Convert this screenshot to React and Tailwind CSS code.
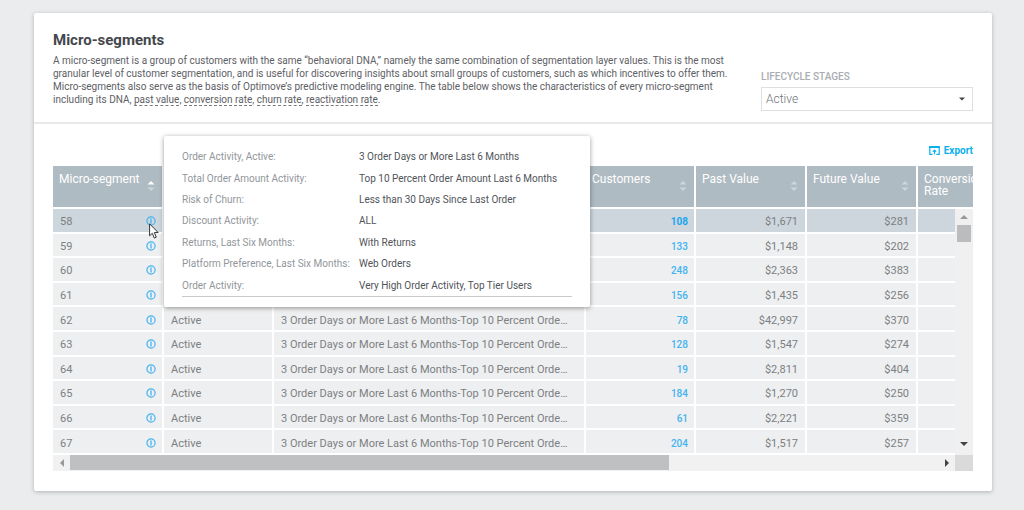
import React from 'react';

const rows = [
  ['58', '108', '$1,671', '$281'],
  ['59', '133', '$1,148', '$202'],
  ['60', '248', '$2,363', '$383'],
  ['61', '156', '$1,435', '$256'],
  ['62', '78', '$42,997', '$370'],
  ['63', '128', '$1,547', '$274'],
  ['64', '19', '$2,811', '$404'],
  ['65', '184', '$1,270', '$250'],
  ['66', '61', '$2,221', '$359'],
  ['67', '204', '$1,517', '$257'],
];

const details = [
  ['Order Activity, Active:', '3 Order Days or More Last 6 Months'],
  ['Total Order Amount Activity:', 'Top 10 Percent Order Amount Last 6 Months'],
  ['Risk of Churn:', 'Less than 30 Days Since Last Order'],
  ['Discount Activity:', 'ALL'],
  ['Returns, Last Six Months:', 'With Returns'],
  ['Platform Preference, Last Six Months:', 'Web Orders'],
  ['Order Activity:', 'Very High Order Activity, Top Tier Users'],
];

function SortIcon({ active }) {
  return (
    <svg viewBox="0 0 8 12" className="mt-[7px] h-3 w-2 shrink-0" aria-hidden="true">
      <path d="M.5 4.5 4 1l3.5 3.5z" className={active ? 'fill-white' : 'fill-[#cbd6db]'} />
      <path d="M.5 7.5 4 11l3.5-3.5z" className="fill-[#cbd6db]" />
    </svg>
  );
}

function InfoIcon() {
  return (
    <svg viewBox="0 0 10 10" className="h-[10px] w-[10px]" aria-hidden="true">
      <circle cx="5" cy="5" r="4.1" fill="none" stroke="#45b3f0" strokeWidth="1.2" />
      <path d="M5 2.5v5" stroke="#45b3f0" strokeWidth="1.3" />
    </svg>
  );
}

function HeadCell({ children, active }) {
  return (
    <th scope="col" className="border-r-2 border-b-2 border-white bg-[#afbbc2] p-0 text-left align-top font-normal">
      <button type="button" className="flex w-full items-start justify-between pt-[7px] pr-[7px] pl-[6px] text-left">
        <span>{children}</span>
        <SortIcon active={active} />
      </button>
    </th>
  );
}

function Term({ children }) {
  return (
    <a href="#" className="border-b border-dashed border-[#777b80]">
      {children}
    </a>
  );
}

function Arrow({ d, className }) {
  return (
    <svg viewBox="0 0 8 8" className="h-2 w-2" aria-hidden="true">
      <path d={d} className={className} />
    </svg>
  );
}

function SegmentTable() {
  return (
    <table className="w-full table-fixed border-separate border-spacing-0">
      <colgroup>
        <col className="w-[111px]" />
        <col className="w-[110px]" />
        <col />
        <col className="w-[110px]" />
        <col className="w-[111px]" />
        <col className="w-[111px]" />
        <col className="w-[37px]" />
        <col className="w-[18px]" />
      </colgroup>
      <thead className="h-[43px] text-xs leading-3 text-white">
        <tr>
          <HeadCell active>Micro-segment</HeadCell>
          <HeadCell>Lifecycle Stage</HeadCell>
          <HeadCell>Name</HeadCell>
          <HeadCell>Customers</HeadCell>
          <HeadCell>Past Value</HeadCell>
          <HeadCell>Future Value</HeadCell>
          <th scope="col" colSpan={2} className="overflow-hidden border-b-2 border-white bg-[#afbbc2] pt-[7px] pl-[6px] text-left align-top font-normal">
            Conversion Rate
          </th>
        </tr>
      </thead>
      <tbody className="h-[246px] text-[11px] text-[#7c7f83]">
        {rows.map(([id, customers, past, future], i) => {
          const cell =
            i === 0
              ? 'border-r-2 border-b-2 border-white bg-[#cdd6dc] pl-[7px] pt-1 pb-0 leading-[18px]'
              : 'border-r-2 border-b-2 border-white bg-[#eeeff0] pl-[7px] pt-1 pb-0 leading-[18px]';
          return (
            <tr key={id}>
              <td className={cell + ' pr-[6px]'}>
                <div className="flex items-center justify-between">
                  <span>{id}</span>
                  <button type="button" className="pb-[2px]" aria-label={'Details of ' + id}>
                    <InfoIcon />
                  </button>
                </div>
              </td>
              <td className={cell}>Active</td>
              <td className={cell + ' overflow-hidden whitespace-nowrap'}>
                3 Order Days or More Last 6 Months-Top 10 Percent Orde…
              </td>
              <td className={cell + ' pr-[6px] text-right'}>
                <a href="#" className={i === 0 ? 'text-[10px] font-bold text-[#1ba5f0]' : 'text-[10px] font-medium text-[#45b3f0]'}>
                  {customers}
                </a>
              </td>
              <td className={cell + ' pr-[7px] text-right'}>{past}</td>
              <td className={cell + ' pr-[7px] text-right'}>{future}</td>
              <td className={i === 0 ? 'border-b-2 border-white bg-[#cdd6dc]' : 'border-b-2 border-white bg-[#eeeff0]'} />
              {i === 0 && (
                <td rowSpan={rows.length} className="h-px bg-[#f0f0f1] p-0">
                  <div className="flex h-full flex-col items-center justify-between pt-1 pb-[7px]">
                    <div className="flex flex-col items-center gap-1">
                      <Arrow d="M0 6 4 2l4 4z" className="fill-[#98999b]" />
                      <div className="h-[17px] w-[14px] bg-[#bbbcbd]" />
                    </div>
                    <Arrow d="M0 2h8L4 6z" className="fill-[#444]" />
                  </div>
                </td>
              )}
            </tr>
          );
        })}
      </tbody>
    </table>
  );
}

function DetailsCard() {
  return (
    <div
      role="tooltip"
      className="absolute -top-[30px] left-[111px] w-[426px] rounded-xs bg-white px-[18px] pt-[10px] pb-[10px] shadow-[0_1px_5px_rgba(0,0,0,0.4)]"
    >
      <dl className="grid h-[151px] auto-rows-fr grid-cols-[177px_1fr] items-center border-b border-[#c8cacc] text-[10px] text-[#505459]">
        {details.map(([term, value]) => (
          <React.Fragment key={term}>
            <dt className="whitespace-nowrap text-[#92969a]">{term}</dt>
            <dd>{value}</dd>
          </React.Fragment>
        ))}
      </dl>
    </div>
  );
}

export default function App() {
  return (
    <div className="min-h-screen bg-[#ebecee] pt-[13px] pr-8 pb-[19px] pl-[34px] font-['Roboto',sans-serif]">
      <main className="rounded-xs bg-white pb-5 shadow-[0_1px_4px_rgba(0,0,0,0.25)]">
        <header className="flex items-end justify-between border-b-2 border-[#e8e9ea] pt-[18px] pr-[19px] pb-[11px] pl-[19px]">
          <div className="w-[685px] pb-[5px]">
            <h1 className="text-[15px] leading-[18px] font-bold text-[#44474b]">Micro-segments</h1>
            <p className="mt-[5px] text-[10px] leading-[13px] text-[#5d6065]">
              A micro-segment is a group of customers with the same “behavioral DNA,” namely the same combination of
              segmentation layer values. This is the most granular level of customer segmentation, and is useful for
              discovering insights about small groups of customers, such as which incentives to offer them.
              Micro-segments also serve as the basis of Optimove’s predictive modeling engine. The table below shows
              the characteristics of every micro-segment including its DNA, <Term>past value</Term>,{' '}
              <Term>conversion rate</Term>, <Term>churn rate</Term>, <Term>reactivation rate</Term>.
            </p>
          </div>
          <div className="w-[212px]">
            <label htmlFor="stage" className="block text-[10px] leading-3 font-medium text-[#a9adb2]">
              LIFECYCLE STAGES
            </label>
            <div className="relative mt-1">
              <select
                id="stage"
                className="block h-6 w-full appearance-none rounded-none border border-[#dddfe0] bg-white px-1 text-xs font-light text-[#6d7075]"
              >
                <option>Active</option>
              </select>
              <svg viewBox="0 0 6 4" className="pointer-events-none absolute top-[10px] right-2 h-1 w-[6px]" aria-hidden="true">
                <path d="M0 .5h6L3 3.5z" fill="#444" />
              </svg>
            </div>
          </div>
        </header>

        <section className="px-[19px]">
          <div className="flex h-[42px] items-end justify-end pb-[7px]">
            <button type="button" className="flex items-center gap-1 text-[10px] leading-4 font-bold text-[#0ab0ee]">
              <svg viewBox="0 0 11 9" className="mb-[2px] h-[9px] w-[11px]" fill="none" stroke="currentColor" aria-hidden="true">
                <path d="M3.6 8.3H.8V1h9.4v7.3H7.4" strokeWidth="1.2" />
                <path d="M.2 1h10.6" strokeWidth="2" />
                <path d="M5.5 8.3V4.4M3.8 5.8 5.5 4.1l1.7 1.7" strokeWidth="1.1" />
              </svg>
              Export
            </button>
          </div>
          <div className="relative">
            <SegmentTable />
            <div className="flex h-4 bg-[#f1f1f2]">
              <div className="flex flex-1 items-center">
                <div className="flex w-[17px] justify-center">
                  <Arrow d="M6 0v8L2 4z" className="fill-[#98999b]" />
                </div>
                <div className="flex h-full flex-1 items-start">
                  <div className="h-[15px] w-[69%] bg-[#bfc0c1]" />
                </div>
                <div className="flex w-[17px] justify-center">
                  <Arrow d="M2 0v8l4-4z" className="fill-[#444]" />
                </div>
              </div>
              <div className="w-[18px] bg-[#dadadb]" />
            </div>
            <DetailsCard />
            <svg viewBox="0 0 10 16" className="absolute top-[57px] left-24 h-4 w-[10px]" aria-hidden="true">
              <path d="M.6.8v12l2.7-2.5 2 4.8 2-.9-2-4.6h3.9z" fill="#fff" stroke="#333" strokeWidth="1" />
            </svg>
          </div>
        </section>
      </main>
    </div>
  );
}
